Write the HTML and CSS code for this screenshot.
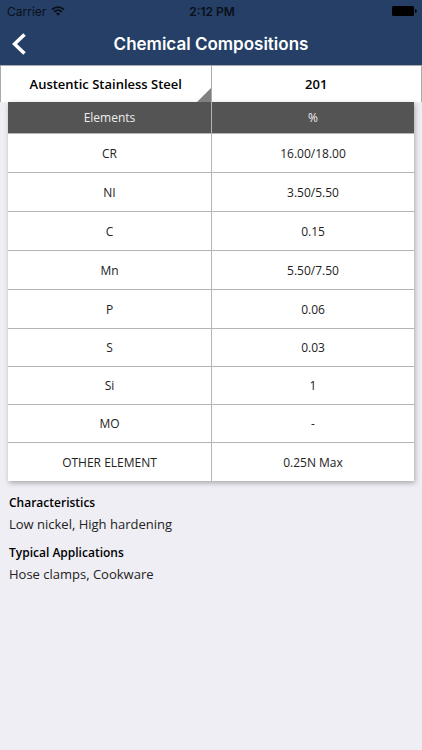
FILE: index.html
```html
<!DOCTYPE html>
<html lang="en">
<head>
  <meta charset="UTF-8" />
  <meta name="viewport" content="width=device-width, initial-scale=1.0"/>
  <title>Chemical Compositions</title>
  <link rel="stylesheet" href="styles.css">
</head>
<body>

  <header class="header">
    <div class="status-bar">
      <div class="carrier">
        <span>Carrier</span>
        <svg class="wifi" viewBox="0 0 14 10" width="14" height="10" aria-hidden="true">
          <path d="M1 3.6 C4.5 0.4 9.5 0.4 13 3.6" />
          <path d="M3.1 5.9 C5.4 3.8 8.6 3.8 10.9 5.9" />
          <path class="dot" d="M4.9 7.6 C6.1 6.5 7.9 6.5 9.1 7.6 L7 9.8 Z" />
        </svg>
      </div>
      <span class="time">2:12 PM</span>
      <div class="battery">
        <svg viewBox="0 0 25 10" width="25" height="10" aria-hidden="true">
          <rect x="0" y="0" width="22" height="10" rx="1.5" />
          <path d="M23 3 Q24.8 3.4 24.8 5 Q24.8 6.6 23 7 Z" />
        </svg>
      </div>
    </div>
    <div class="nav-bar">
      <button type="button" class="back-btn" aria-label="Back">
        <svg viewBox="0 0 14 22" width="14" height="22" aria-hidden="true">
          <path d="M12.5 1.5 L2.5 11 L12.5 20.5" />
        </svg>
      </button>
      <h1>Chemical Compositions</h1>
    </div>
  </header>

  <div class="picker">
    <div class="picker-cell">
      <select id="category" aria-label="Category">
        <option>Austentic Stainless Steel</option>
      </select>
      <svg class="corner" viewBox="0 0 14 14" width="14" height="14" aria-hidden="true">
        <path d="M14 0 V14 H0 Z" />
      </svg>
    </div>
    <div class="picker-cell">
      <select id="grade" aria-label="Grade">
        <option>201</option>
      </select>
    </div>
  </div>

  <main class="content">
    <table class="composition">
      <thead>
        <tr><th>Elements</th><th>%</th></tr>
      </thead>
      <tbody>
        <tr><td>CR</td><td>16.00/18.00</td></tr>
        <tr><td>NI</td><td>3.50/5.50</td></tr>
        <tr><td>C</td><td>0.15</td></tr>
        <tr><td>Mn</td><td>5.50/7.50</td></tr>
        <tr><td>P</td><td>0.06</td></tr>
        <tr><td>S</td><td>0.03</td></tr>
        <tr><td>Si</td><td>1</td></tr>
        <tr><td>MO</td><td>-</td></tr>
        <tr><td>OTHER ELEMENT</td><td>0.25N Max</td></tr>
      </tbody>
    </table>

    <section class="info">
      <h2>Characteristics</h2>
      <p>Low nickel, High hardening</p>
      <h2>Typical Applications</h2>
      <p>Hose clamps, Cookware</p>
    </section>
  </main>

</body>
</html>
```

FILE: styles.css
```css
* {
  box-sizing: border-box;
}

body {
  margin: 0;
  font-family: "Open Sans", "Noto Sans", sans-serif;
  font-size: 12px;
  color: #222;
  background-color: #efeef4;
}

/* Header */
.header {
  background-color: #253f67;
}

.status-bar {
  display: grid;
  grid-template-columns: 1fr auto 1fr;
  align-items: center;
  height: 22px;
  padding: 0 5px 0 7px;
  font-family: Inter, sans-serif;
  color: #0a0f18;
}

.carrier {
  display: flex;
  align-items: center;
  gap: 5px;
}

.wifi path {
  fill: none;
  stroke: #0a0f18;
  stroke-width: 1.7;
}

.wifi .dot {
  fill: #0a0f18;
  stroke: none;
}

.time {
  font-weight: 600;
}

.battery {
  display: flex;
  justify-content: flex-end;
}

.battery svg {
  fill: #000;
}

.nav-bar {
  display: grid;
  grid-template-columns: 40px 1fr 40px;
  align-items: center;
  height: 43px;
}

.back-btn {
  display: flex;
  padding: 0 0 0 12px;
  border: none;
  background: none;
  cursor: pointer;
}

.back-btn path {
  fill: none;
  stroke: #fff;
  stroke-width: 3.6;
}

.nav-bar h1 {
  margin: 0;
  font-family: Inter, sans-serif;
  font-size: 17px;
  font-weight: 600;
  text-align: center;
  color: #fff;
}

/* Grade picker */
.picker {
  display: flex;
  border: 1px solid #aaa;
  border-bottom: none;
  background-color: #fff;
}

.picker-cell {
  position: relative;
  flex: 1;
}

.picker-cell + .picker-cell {
  border-left: 1px solid #aaa;
}

.corner {
  position: absolute;
  right: 0;
  bottom: 0;
  fill: #808080;
  pointer-events: none;
}

.picker select {
  display: block;
  width: 100%;
  height: 36px;
  padding: 0;
  border: none;
  appearance: none;
  background: none;
  font-family: inherit;
  font-size: 13px;
  font-weight: 600;
  text-align: center;
  text-align-last: center;
  color: #000;
}

/* Table */
.content {
  padding: 0 8px;
}

.composition {
  width: 100%;
  table-layout: fixed;
  border-collapse: separate;
  border-spacing: 0;
  background-color: #fff;
  box-shadow: 1px 2px 5px rgba(0, 0, 0, 0.3);
}

.composition th,
.composition td {
  padding: 0;
  text-align: center;
  border-bottom: 1px solid #b4b4b4;
}

.composition th {
  height: 32px;
  font-weight: 400;
  color: #eee;
  background-color: #545454;
}

.composition td {
  height: 39px;
}

.composition tr:nth-child(n+6) td {
  height: 38px;
}

.composition th + th,
.composition td + td {
  border-left: 1px solid #b4b4b4;
}

.composition tr:last-child td {
  border-bottom: none;
}

.composition thead tr:last-child th {
  border-bottom: 1px solid #b4b4b4;
}

/* Info text */
.info {
  padding: 12px 1px;
}

.info h2 {
  margin: 0;
  font-size: 12px;
  font-weight: 600;
  line-height: 20px;
  color: #000;
}

.info p {
  margin: 0 0 8px;
  font-size: 13px;
  line-height: 22px;
}
```
